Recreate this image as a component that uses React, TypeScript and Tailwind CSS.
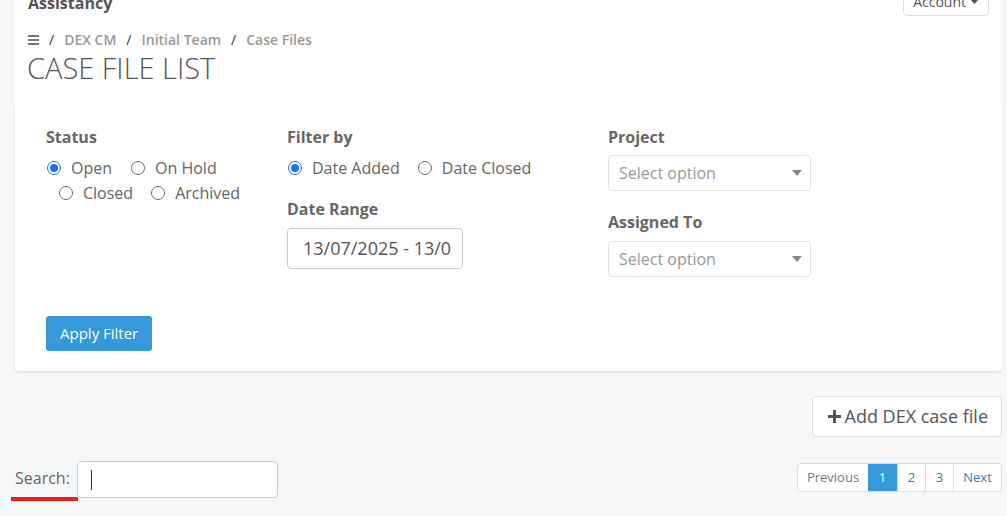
import React from "react";

const Radio = ({ checked, label, className = "" }: { checked?: boolean; label: string; className?: string }) => (
  <span className={`flex items-center ${className}`}>
    {checked ? (
      <span className="w-[14px] h-[14px] rounded-full border-[1.5px] border-[#1a73e8] flex items-center justify-center">
        <span className="w-[8px] h-[8px] rounded-full bg-[#1a73e8]" />
      </span>
    ) : (
      <span className="w-[14px] h-[14px] rounded-full border-[1.5px] border-[#6b6b6b]" />
    )}
    <span className="ml-[10px]">{label}</span>
  </span>
);

const Caret = () => (
  <svg width="10" height="6" viewBox="0 0 10 6" className="ml-auto">
    <path d="M0 0 L10 0 L5 6 Z" fill="#888" />
  </svg>
);

const SelectBox = () => (
  <div className="w-[203px] h-9 border border-[#e3e3e3] rounded-[4px] bg-white flex items-center pl-[10px] pr-[8px] text-[16px] text-[#999]">
    Select option
    <Caret />
  </div>
);

export default function App() {
  return (
    <div
      className="w-[1007px] h-[516px] overflow-hidden bg-[#f6f7f9] text-[#666]"
      style={{ fontFamily: '"Open Sans", "Liberation Sans", sans-serif' }}
    >
      <div className="pl-[15px] pr-[5px]">
        {/* Header card */}
        <div className="bg-white h-[106px] px-[13px] flex flex-col">
          <div className="flex items-start justify-between -mt-[14px]">
            <div className="text-[16px] font-bold text-[#555] leading-[22px] mt-[6px]">Assistancy</div>
            <div className="h-[30px] px-[9px] border border-[#ddd] rounded-[4px] flex items-center text-[14px] text-[#555] bg-white">
              Account
              <svg width="9" height="5" viewBox="0 0 9 5" className="ml-[4px]">
                <path d="M0 0 L9 0 L4.5 5 Z" fill="#555" />
              </svg>
            </div>
          </div>
          <div className="flex items-center text-[14px] font-semibold text-[#999] leading-5 mt-[14px]">
            <svg width="11" height="10" viewBox="0 0 11 10" className="mr-[10px]">
              <rect x="0" y="0" width="11" height="2" fill="#777" />
              <rect x="0" y="4" width="11" height="2" fill="#777" />
              <rect x="0" y="8" width="11" height="2" fill="#777" />
            </svg>
            <span className="text-[#333] font-normal">/</span>
            <span className="ml-[10px]">DEX CM</span>
            <span className="text-[#333] font-normal ml-[10px]">/</span>
            <span className="ml-[10px]">Initial Team</span>
            <span className="text-[#333] font-normal ml-[10px]">/</span>
            <span className="ml-[10px]">Case Files</span>
          </div>
          <div className="text-[29px] font-light text-[#555] leading-[36px] -ml-[1px]">CASE FILE LIST</div>
        </div>

        {/* Filter card */}
        <div className="bg-white rounded-b-[4px] shadow-[0_1px_3px_rgba(0,0,0,0.13)] pt-[21px] pb-5 pl-[31px]">
          <div className="flex">
            <div className="w-[241px]">
              <div className="text-[16px] font-bold leading-5">Status</div>
              <div className="mt-2 text-[16px] pl-[1px]">
                <div className="flex items-center h-[25px]">
                  <Radio checked label="Open" />
                  <Radio label="On Hold" className="ml-[19px]" />
                </div>
                <div className="flex items-center h-[25px] pl-[12px]">
                  <Radio label="Closed" />
                  <Radio label="Archived" className="ml-[18px]" />
                </div>
              </div>
            </div>
            <div className="w-[321px]">
              <div className="text-[16px] font-bold leading-5">Filter by</div>
              <div className="mt-2 text-[16px] pl-[1px] flex items-center h-[25px]">
                <Radio checked label="Date Added" />
                <Radio label="Date Closed" className="ml-[18px]" />
              </div>
              <div className="text-[16px] font-bold leading-5 mt-[19px]">Date Range</div>
              <div className="mt-[9px] w-[176px] h-[41px] border border-[#ccc] rounded-[4px] flex items-center pl-[15px] text-[18px] text-[#555] overflow-hidden whitespace-nowrap">
                13/07/2025 - 13/0
              </div>
            </div>
            <div>
              <div className="text-[16px] font-bold leading-5">Project</div>
              <div className="mt-2">
                <SelectBox />
              </div>
              <div className="text-[16px] font-bold leading-5 mt-[21px]">Assigned To</div>
              <div className="mt-[9px]">
                <SelectBox />
              </div>
            </div>
          </div>
          <button className="mt-[39px] h-[35px] px-[14px] bg-[#3498db] text-white text-[15px] rounded-[3px]">
            Apply Filter
          </button>
        </div>

        <div className="flex justify-end mt-[25px]">
          <button className="h-[41px] pl-[15px] pr-[13px] bg-white border border-[#ddd] rounded-[4px] text-[18px] text-[#555] flex items-center">
            <svg width="13" height="13" viewBox="0 0 13 13" className="mr-[4px]">
              <path d="M5 0 H8 V5 H13 V8 H8 V13 H5 V8 H0 V5 H5 Z" fill="#555" />
            </svg>
            Add DEX case file
          </button>
        </div>

        <div className="flex items-start justify-between mt-6">
          <div className="flex items-center">
            <div className="relative text-[16px] text-[#666] mr-[7px] -mt-[3px]">
              Search:
              <span className="absolute -left-[4px] -right-[8px] top-[31px] h-[4px] bg-[#e5201e]" />
            </div>
            <div className="w-[201px] h-[37px] border border-[#ccc] rounded-[4px] bg-white flex items-center pl-[13px]">
              <span className="w-[1px] h-[20px] bg-[#333]" />
            </div>
          </div>
          <div className="flex mt-[2px] h-[29px] text-[13px] border border-[#ddd] rounded-[4px] overflow-hidden bg-white">
            <span className="w-[70px] flex items-center justify-center text-[#777]">Previous</span>
            <span className="w-[29px] flex items-center justify-center bg-[#3498db] text-white">1</span>
            <span className="w-[28px] flex items-center justify-center text-[#337ab7] border-l border-[#ddd]">2</span>
            <span className="w-[28px] flex items-center justify-center text-[#337ab7] border-l border-[#ddd]">3</span>
            <span className="w-[48px] flex items-center justify-center text-[#337ab7] border-l border-[#ddd]">Next</span>
          </div>
        </div>
      </div>
    </div>
  );
}
